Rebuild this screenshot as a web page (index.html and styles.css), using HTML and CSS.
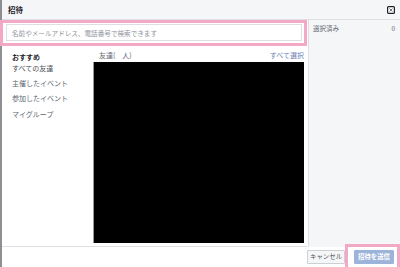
FILE: index.html
```html
<!DOCTYPE html>
<html>
<head>
<meta charset="utf-8" />
<meta name="viewport" content="width=device-width, initial-scale=1.0">
<link rel="stylesheet" href="styles.css">
</head>
<body>
<div class="dialog">
  <header class="dlg-head">
    <h4 class="title">招待</h4>
    <a href="#" class="btn-close" title="閉じる">
      <svg width="8" height="8" viewBox="0 0 8 8"><rect x="0.6" y="0.6" width="6.8" height="6.8" rx="1" fill="#fff" stroke="#1d2129" stroke-width="1.2"/><path d="M2.5 2.5 L5.5 5.5 M5.5 2.5 L2.5 5.5" stroke="#666" stroke-width="0.9"/></svg>
    </a>
  </header>
  <div class="dlg-body">
    <div class="main">
      <div class="search-hl">
        <div class="search">名前やメールアドレス、電話番号で検索できます</div>
      </div>
      <div class="cols">
        <ul class="nav">
          <li class="active">おすすめ</li>
          <li class="first">すべての友達</li>
          <li>主催したイベント</li>
          <li>参加したイベント</li>
          <li>マイグループ</li>
        </ul>
        <div class="friends">
          <div class="friends-head">
            <span>友達(　人)</span>
            <a href="#" class="link">すべて選択</a>
          </div>
          <div class="friends-list"></div>
        </div>
      </div>
    </div>
    <aside class="side">
      <div class="side-row"><span>選択済み</span><span>0</span></div>
    </aside>
  </div>
  <footer class="dlg-foot">
    <a href="#" class="btn btn-default">キャンセル</a>
    <a href="#" class="btn btn-primary">招待を送信</a>
    <div class="send-hl"></div>
  </footer>
</div>
</body>
</html>
```

FILE: styles.css
```css
:root {--line: #dddfe2; --pane: #f5f6f7; --pink: #f3a9c6; --text: #4b4f56;}
html, body {margin: 0; padding: 0;}
body {width: 400px; height: 267px; overflow: hidden; background: #fff; font-family: "Noto Sans CJK JP", "Liberation Sans", sans-serif; font-size: 7px; color: var(--text);}
a {text-decoration: none;}
ul {list-style: none; margin: 0; padding: 0;}
.dialog {display: flex; flex-direction: column; height: 267px; border-left: 2px solid #8d8f93; box-sizing: border-box; position: relative;}
.dlg-head {height: 20px; box-sizing: border-box; display: flex; align-items: center; justify-content: space-between; padding: 0 5px 0 6px; background: var(--pane); border-bottom: 1px solid var(--line);}
.title {margin: 0; font-size: 7.5px; font-weight: bold; color: #1d2129;}
.btn-close {display: flex; margin-top: 1px;}
.dlg-body {display: flex; flex: 1 1 auto; min-height: 0;}
.main {width: 305px; display: flex; flex-direction: column; border-bottom: 1px solid var(--line);}
.search-hl {height: 26px; box-sizing: border-box; margin-left: -2px; border: 3px solid var(--pink); padding: 1px 2px 2px 3px; display: flex;}
.search {flex: 1 1 auto; border: 1px solid var(--line); background: #fff; display: flex; align-items: center; padding-left: 5px; color: #90949c; font-size: 6.6px;}
.cols {display: flex; flex: 1 1 auto; min-height: 0;}
.nav {width: 91px; padding: 6px 0 0 10px; box-sizing: border-box;}
.nav li {height: 15.3px; line-height: 15.3px; color: #606770;}
.nav li.active {height: 10px; line-height: 10px; font-weight: bold; color: #1d2129;}
.nav li.first {height: 12px; line-height: 12px; margin-bottom: 2px; color: #4b4f56;}
.friends {flex: 1 1 auto; display: flex; flex-direction: column; padding-bottom: 3px; padding-right: 3px;}
.friends-head {height: 16px; display: flex; align-items: center; justify-content: space-between; padding: 2px 0 0 6px; box-sizing: border-box; color: #606770;}
.link {color: #6d84b4;}
.friends-list {flex: 1 1 auto; background: #000; border-left: 1px solid #9a9a9a;}
.side {flex: 1 1 auto; background: var(--pane); border-left: 1px solid var(--line); margin-left: 1px;}
.side-row {display: flex; justify-content: space-between; padding: 3px 5px 0 4px; font-size: 6.5px; color: #606770;}
.dlg-foot {height: 20px; display: flex; align-items: center; justify-content: flex-end; padding: 0 6px 0 0; gap: 9px; box-sizing: border-box;}
.btn {height: 12px; line-height: 12px; padding: 0 2px; font-size: 6.4px; border: 1px solid; border-radius: 1px;}
.btn-default {color: #4b4f56; background: var(--pane); border-color: #ccd0d5;}
.btn-primary {color: #fff; background: #9db4da; border-color: #9db4da; font-weight: bold; padding: 0 3px;}
.send-hl {position: absolute; right: 0; bottom: 0; width: 55px; height: 23px; border: 3px solid var(--pink); border-bottom: 0; box-sizing: border-box;}
```
